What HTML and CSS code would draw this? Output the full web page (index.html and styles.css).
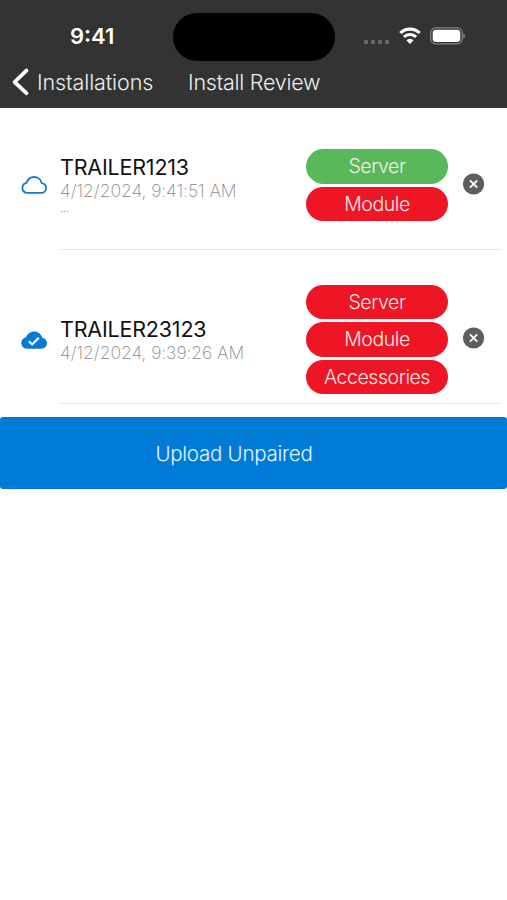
FILE: index.html
```
<!DOCTYPE html>
<html lang="en">
    <head>
        <meta charset="UTF-8" />
        <meta name="viewport" content="width=device-width, initial-scale=1.0"/>
        <title>Install Review</title>
        <link rel="stylesheet" href="styles.css">
    </head>
    <body>
        <header>
            <div class="statusbar">
                <span class="time">9:41</span>
                <div class="island"></div>
                <div class="indicators">
                    <svg class="dots" width="25" height="6" viewBox="0 0 25 6" fill="#68686a">
                        <rect x="0" y="1" width="4" height="4" rx="1"/>
                        <rect x="7" y="1" width="4" height="4" rx="1"/>
                        <rect x="14" y="1" width="4" height="4" rx="1"/>
                        <rect x="21" y="1" width="4" height="4" rx="1"/>
                    </svg>
                    <svg class="wifi" width="22" height="17" viewBox="0 0 22 17" fill="none" stroke="#fff" stroke-width="3.1">
                        <path d="M1.3 6 A14 14 0 0 1 20.7 6"/>
                        <path d="M4.9 9.9 A8.8 8.8 0 0 1 17.1 9.9"/>
                        <path d="M11 17 L7.4 13.3 A5 5 0 0 1 14.6 13.3 Z" fill="#fff" stroke="none"/>
                    </svg>
                    <svg class="battery" width="36" height="18" viewBox="0 0 36 18">
                        <rect x="0.7" y="0.9" width="31.6" height="16" rx="5" fill="none" stroke="#858585" stroke-width="1.2"/>
                        <rect x="2.7" y="2.8" width="27.6" height="12.2" rx="3.3" fill="#fff"/>
                        <path d="M33.4 6.2 Q36.6 9 33.4 11.8 Z" fill="#858585"/>
                    </svg>
                </div>
            </div>
            <nav>
                <a class="back">
                    <svg width="17" height="28" viewBox="0 0 17 28" fill="none" stroke="#fff" stroke-width="3.8" stroke-linecap="round" stroke-linejoin="round">
                        <path d="M14.4 2.6 L2.6 14 L14.4 25.2"/>
                    </svg>
                    <span>Installations</span>
                </a>
                <h1>Install Review</h1>
            </nav>
        </header>
        <main>
            <ul class="installs">
                <li class="install first">
                    <svg class="cloud" width="26" height="18" viewBox="0 0 26 18" fill="none" stroke="#157bd0" stroke-width="1.8" stroke-linejoin="round">
                        <path d="M6.2 16.9 A5.1 5.1 0 0 1 5.6 6.8 C6.8 3.2 9.7 1 13 1 C16.9 1 20 3.5 20.6 7.2 C23.3 7.6 25.1 9.6 25.1 12 C25.1 14.8 23 16.9 20.3 16.9 Z"/>
                    </svg>
                    <div class="info">
                        <h2>TRAILER1213</h2>
                        <p class="date">4/12/2024, 9:41:51 AM</p>
                        <p class="more">...</p>
                    </div>
                    <div class="pills">
                        <span class="pill ok">Server</span>
                        <span class="pill">Module</span>
                    </div>
                    <svg class="remove" width="22" height="22" viewBox="0 0 22 22">
                        <circle cx="10.6" cy="11" r="10.6" fill="#5e5e5e"/>
                        <path d="M7 7.4 L14.2 14.6 M14.2 7.4 L7 14.6" stroke="#fff" stroke-width="1.8"/>
                    </svg>
                </li>
                <li class="install second">
                    <svg class="cloud" width="26" height="18" viewBox="0 0 26 18">
                        <path d="M6 17.7 A5.8 5.8 0 0 1 5 6.2 C6.4 2.6 9.5 0.4 13 0.4 C17 0.4 20.4 3 21.2 6.8 C24 7.2 26 9.4 26 12.1 C26 15.2 23.5 17.7 20.4 17.7 Z" fill="#0a7ad5"/>
                        <path d="M7.8 10.2 L11.2 13.4 L17.8 6.7" fill="none" stroke="#fff" stroke-width="2"/>
                    </svg>
                    <div class="info">
                        <h2>TRAILER23123</h2>
                        <p class="date">4/12/2024, 9:39:26 AM</p>
                    </div>
                    <div class="pills">
                        <span class="pill">Server</span>
                        <span class="pill">Module</span>
                        <span class="pill">Accessories</span>
                    </div>
                    <svg class="remove" width="22" height="22" viewBox="0 0 22 22">
                        <circle cx="10.6" cy="11" r="10.6" fill="#5e5e5e"/>
                        <path d="M7 7.4 L14.2 14.6 M14.2 7.4 L7 14.6" stroke="#fff" stroke-width="1.8"/>
                    </svg>
                </li>
            </ul>
            <button class="upload" type="button">Upload Unpaired</button>
        </main>
    </body>
</html>
```
FILE: styles.css
```
* {
    box-sizing: border-box;
}
body {
    margin: 0;
    background-color: #fff;
    font-family: Inter, "Liberation Sans", sans-serif;
    font-weight: 300;
}
h1, h2, p, ul {
    margin: 0;
    padding: 0;
    font-weight: inherit;
}
header {
    height: 108px;
    background-color: #333;
    color: #fff;
}
.statusbar {
    display: grid;
    grid-template-columns: 173px 162px 1fr;
    height: 61px;
    padding-top: 13px;
}
.time {
    padding-left: 70px;
    font-size: 22px;
    font-weight: 600;
    line-height: 47px;
}
.island {
    height: 48px;
    border-radius: 24px;
    background-color: #000;
}
.indicators {
    display: flex;
    align-items: flex-start;
    padding-left: 29px;
}
.dots {
    margin-top: 26px;
}
.wifi {
    margin: 14px 0 0 10px;
}
.battery {
    margin: 14px 0 0 9px;
}
nav {
    display: flex;
    align-items: center;
    height: 42px;
    padding-left: 12px;
    font-size: 21.5px;
    letter-spacing: -0.1px;
    color: #eee;
}
.back {
    display: flex;
    align-items: center;
    gap: 8px;
    width: 176px;
}
nav h1 {
    font-size: 21.5px;
    letter-spacing: -0.25px;
}
.installs {
    list-style: none;
}
.install {
    display: grid;
    grid-template-columns: 39px 246px 142px 1fr;
    align-items: center;
    padding-left: 21px;
    background: linear-gradient(#e6e6e6, #e6e6e6) 60px 100% / 441px 1px no-repeat;
}
.first {
    height: 142px;
    padding-top: 12px;
}
.first .info, .first .remove {
    margin-bottom: 2px;
}
.second {
    height: 154px;
    padding-top: 25px;
}
.second .remove {
    margin-bottom: 3px;
}
.info h2 {
    font-size: 21.5px;
    font-weight: 400;
    letter-spacing: -0.2px;
    line-height: 26px;
    color: #111;
}
.date {
    font-size: 17.5px;
    font-weight: 200;
    letter-spacing: -0.05px;
    line-height: 22px;
    color: #888;
}
.more {
    font-size: 11px;
    line-height: 13px;
    color: #888;
}
.pills {
    display: grid;
    gap: 3px;
}
.pill {
    height: 34.5px;
    border-radius: 18px;
    background-color: #ee1524;
    color: #ffe9ea;
    font-size: 19.5px;
    letter-spacing: -0.45px;
    line-height: 35px;
    text-align: center;
}
.ok {
    background-color: #57b95a;
}
.remove {
    margin-left: 15px;
}
.upload {
    display: block;
    width: 100%;
    height: 72px;
    margin-top: 13px;
    padding: 0 39px 0 0;
    border: 0;
    border-radius: 3px;
    background-color: #007cd8;
    color: #e3f5ff;
    font-family: inherit;
    font-size: 20.5px;
    font-weight: 300;
    letter-spacing: -0.25px;
}
```
